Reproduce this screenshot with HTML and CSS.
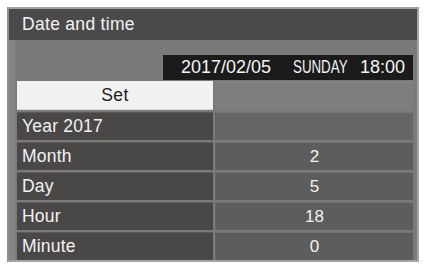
FILE: index.html
```html
<!DOCTYPE html>
<html>
<head>
<meta charset="utf-8">
<link rel="stylesheet" href="styles.css">
</head>
<body>
<div class="panel">
  <div class="title">Date and time</div>
  <div class="content">
    <div class="datebar">
      <span class="date">2017/02/05</span>
      <span class="dow">SUNDAY</span>
      <span class="time">18:00</span>
    </div>
    <div class="grid">
      <div class="set">Set</div>
      <div class="setside"></div>
      <div class="label">Year 2017</div>
      <div class="value empty"></div>
      <div class="label">Month</div>
      <div class="value">2</div>
      <div class="label">Day</div>
      <div class="value">5</div>
      <div class="label">Hour</div>
      <div class="value">18</div>
      <div class="label">Minute</div>
      <div class="value">0</div>
    </div>
  </div>
</div>
</body>
</html>
```
FILE: styles.css
```css
html, body {
  margin: 0;
  padding: 0;
  background: #ffffff;
}
body {
  font-family: "Liberation Sans", Arial, sans-serif;
}
.panel {
  margin: 7px 0 0 7px;
  width: 412px;
  height: 255px;
  box-sizing: border-box;
  border: 2px solid #a3a3a3;
  border-left-color: #8f8f8f;
  background: #7a7a7a;
  display: flex;
  flex-direction: column;
}
.title {
  height: 31px;
  background: #4b4a4a;
  color: #f2f2f2;
  font-size: 17.5px;
  letter-spacing: 0.3px;
  line-height: 31px;
  padding-left: 13px;
  flex: none;
}
.content {
  flex: 1;
  padding: 15px 4px 0 8px;
  background: linear-gradient(to right, #868686 0, #868686 6px, #7a7a7a 6px);
  display: flex;
  flex-direction: column;
}
.datebar {
  align-self: flex-end;
  width: 250px;
  height: 25px;
  box-sizing: border-box;
  background: #1c1b1b;
  color: #f4f4f4;
  font-size: 18px;
  line-height: 25px;
  display: flex;
  align-items: center;
  padding-left: 18px;
}
.date {
  width: 112px;
}
.dow {
  display: inline-block;
  transform: scaleX(0.74);
  transform-origin: left center;
  width: 67px;
}
.grid {
  margin-top: 2px;
  display: grid;
  grid-template-columns: 196px 198px;
  grid-auto-rows: 28px;
  column-gap: 2px;
  row-gap: 2px;
}
.grid .set {
  background: #f1f1f1;
  color: #222;
  font-size: 17.5px;
  letter-spacing: 0.4px;
  text-align: center;
  line-height: 29px;
  height: 29px;
  margin-top: -1px;
  border-bottom: 1px solid #d8d8d8;
  box-sizing: border-box;
}
.setside {
  background: #7e7e7e;
  border-top: 1px solid #8a8a8a;
}
.label {
  background: #4a4747;
  color: #f2f2f2;
  font-size: 17.5px;
  letter-spacing: 0.2px;
  line-height: 27px;
  padding-left: 5px;
  border-top: 1px solid #5c5a5a;
  box-sizing: border-box;
}
.value {
  background: #5e5d5d;
  color: #f2f2f2;
  font-size: 17px;
  line-height: 27px;
  text-align: center;
  border-top: 1px solid #747474;
  border-left: 1px solid #676666;
  box-sizing: border-box;
}
.value.empty {
  background: #666565;
}
```
